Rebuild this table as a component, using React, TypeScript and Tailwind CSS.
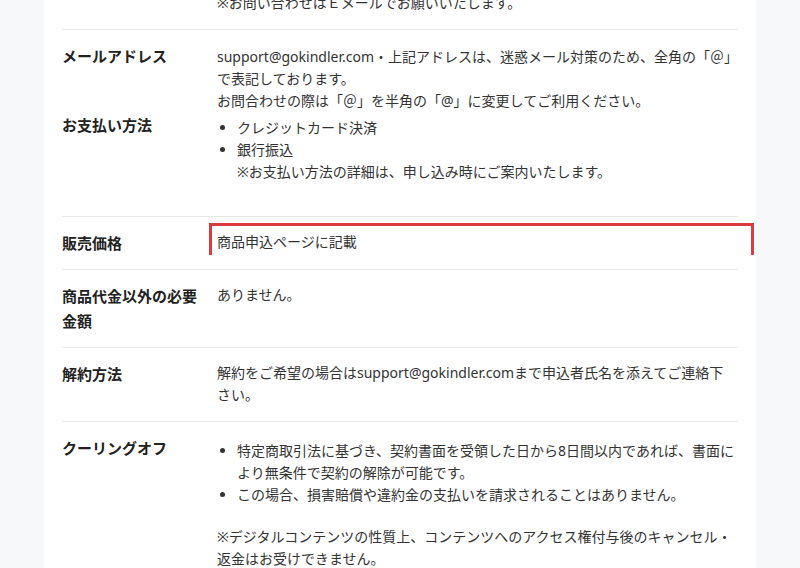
const FONT = "font-['Noto_Sans','Noto_Sans_CJK_JP',sans-serif]";

function Label({ children }: { children: React.ReactNode }) {
  return (
    <div className="w-[155px] shrink-0 pr-[12px] text-[15px] leading-[25px] font-bold text-[#222]">
      {children}
    </div>
  );
}

export default function App() {
  return (
    <div className={`min-h-screen bg-[#f7f8fa] ${FONT} overflow-hidden`}>
      <div className="mx-auto w-[712px] bg-white px-[18px] -mt-[8px] pb-10 text-[#333]">
        {/* tail of the previous row (scrolled out of view) */}
        <div className="flex pb-[13px]">
          <Label>{''}</Label>
          <div className="flex-1 pb-[2px] text-[14px] leading-[22px]">
            ※お問い合わせはＥメールでお願いいたします。
          </div>
        </div>

        {/* メールアドレス + お支払い方法 share one block */}
        <div className="border-t border-[#e8e8e8] pt-[13.5px] pb-[13.5px]">
          <div className="flex">
            <Label>メールアドレス</Label>
            <div className="flex-1 pt-[2px] text-[14px] leading-[22px]">
              support@gokindler.com・上記アドレスは、迷惑メール対策のため、全角の「＠」
              <br />
              で表記しております。
              <br />
              お問合わせの際は「＠」を半角の「@」に変更してご利用ください。
            </div>
          </div>
          <div className="flex pt-[1px]">
            <Label>お支払い方法</Label>
            <div className="flex-1 pb-[20px] text-[14px] leading-[22px]">
              <ul className="mt-[4px] list-disc pl-[20px]">
                <li>クレジットカード決済</li>
                <li>
                  銀行振込
                  <br />
                  ※お支払い方法の詳細は、申し込み時にご案内いたします。
                </li>
              </ul>
            </div>
          </div>
        </div>

        <div className="flex border-t border-[#e8e8e8] py-[13.5px]">
          <Label>販売価格</Label>
          <div className="relative flex-1 pb-[2px] text-[14px] leading-[22px]">
            商品申込ページに記載
            {/* highlight bracket */}
            <div className="absolute left-[-8px] top-[-7.5px] h-[32px] w-[545px] border-[3px] border-b-0 border-[#dc3a40]" />
          </div>
        </div>

        <div className="flex border-t border-[#e8e8e8] py-[13.5px]">
          <Label>商品代金以外の必要金額</Label>
          <div className="flex-1 pb-[2px] text-[14px] leading-[22px]">ありません。</div>
        </div>

        <div className="flex border-t border-[#e8e8e8] py-[13.5px]">
          <Label>解約方法</Label>
          <div className="flex-1 pb-[2px] text-[14px] leading-[22px]">
            解約をご希望の場合はsupport@gokindler.comまで申込者氏名を添えてご連絡下
            <br />
            さい。
          </div>
        </div>

        <div className="flex border-t border-[#e8e8e8] py-[13.5px]">
          <Label>クーリングオフ</Label>
          <div className="flex-1 pb-[2px] text-[14px] leading-[22px]">
            <ul className="mt-[4px] list-disc pl-[20px]">
              <li>
                特定商取引法に基づき、契約書面を受領した日から8日間以内であれば、書面に
                <br />
                より無条件で契約の解除が可能です。
              </li>
              <li>この場合、損害賠償や違約金の支払いを請求されることはありません。</li>
            </ul>
            <p className="mt-[20px]">
              ※デジタルコンテンツの性質上、コンテンツへのアクセス権付与後のキャンセル・
              <br />
              返金はお受けできません。
            </p>
          </div>
        </div>
      </div>
    </div>
  );
}
